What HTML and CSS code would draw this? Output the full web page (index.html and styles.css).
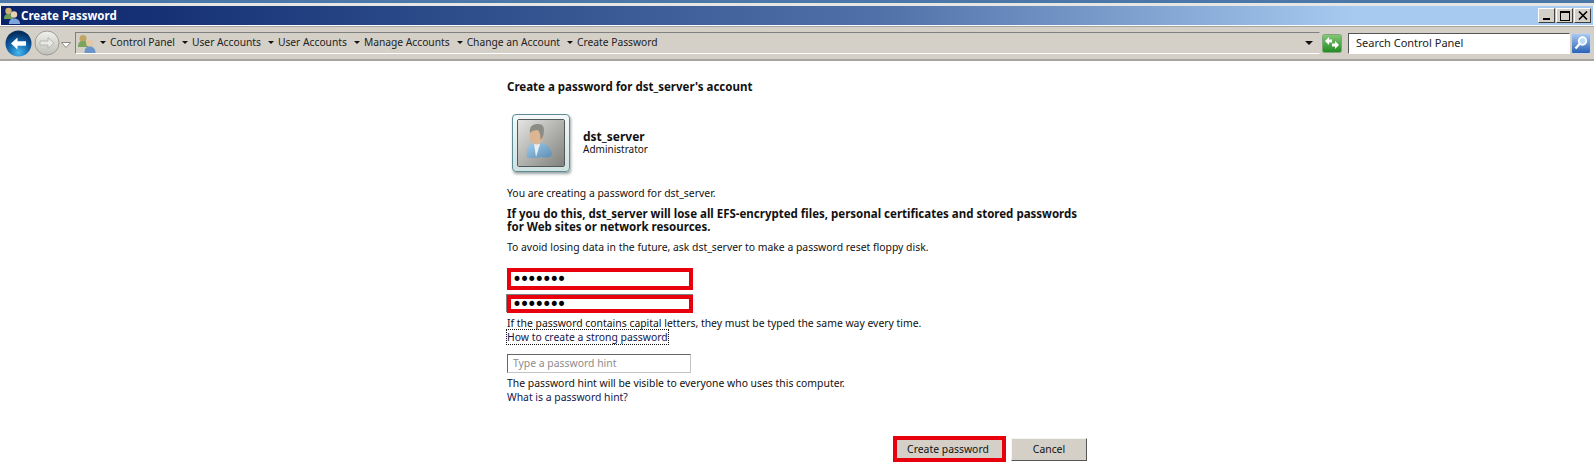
FILE: index.html
```html
<!DOCTYPE html>
<html lang="en">
<head>
<meta charset="utf-8">
<title>Create Password</title>
<link rel="stylesheet" href="styles.css">
</head>
<body>
<div class="topstrip"></div>
<header class="titlebar">
  <svg class="title-icon" width="18" height="17" viewBox="0 0 18 17"><circle cx="5.500" cy="4" r="3.200" fill="#cfae74"/><path d="M1 12c0-4 2-5 4.500-5s4.500 1 4.500 5z" fill="#6f9a58"/><circle cx="11" cy="7.500" r="3.200" fill="#e6d2ae"/><path d="M6 17c0-4 2-5.500 5-5.500s6 1.500 6 5.500z" fill="#7ea6dc"/></svg>
  <span class="title-text">Create Password</span>
  <div class="winbtns">
    <span class="winbtn"><i class="g-min"></i></span>
    <span class="winbtn"><i class="g-max"></i></span>
    <span class="winbtn"><svg width="10" height="9" viewBox="0 0 10 9"><path d="M1 .500l8 8M9 .500l-8 8" stroke="#000" stroke-width="1.600"/></svg></span>
  </div>
</header>
<nav class="toolbar">
  <span class="nav-back"><svg width="27" height="27" viewBox="0 0 27 27"><defs><radialGradient id="bk" cx="50%" cy="85%" r="75%"><stop offset="0" stop-color="#45b8ee"/><stop offset=".6" stop-color="#0f5fa6"/><stop offset="1" stop-color="#062f60"/></radialGradient></defs><circle cx="13.500" cy="13.500" r="13" fill="url(#bk)"/><path d="M6 13.500l6.500-6v3.800h8.500v4.400h-8.500v3.800z" fill="#fff"/></svg></span>
  <span class="nav-fwd"><svg width="26" height="26" viewBox="0 0 26 26"><defs><linearGradient id="fw" x1="0" y1="0" x2="0" y2="1"><stop offset="0" stop-color="#f0f0ec"/><stop offset="1" stop-color="#c0c0ba"/></linearGradient></defs><circle cx="13" cy="13" r="12" fill="url(#fw)" stroke="#9c9c96"/><path d="M20 13l-6-5.500v3.500h-8v4h8v3.500z" fill="#e8e8e4" stroke="#aeaea8" stroke-width=".8"/></svg></span>
  <svg class="nav-drop" width="10" height="6" viewBox="0 0 10 6"><path d="M.5.500h9L5 5.500z" fill="#fff" stroke="#8a8a86"/></svg>
  <div class="address">
    <svg class="addr-icon" width="19" height="19" viewBox="0 0 19 19"><circle cx="6" cy="4.500" r="3.500" fill="#bfa460"/><path d="M1 13c0-5 2-6 5-6s5 1 5 6z" fill="#7aa55e"/><circle cx="12.500" cy="9" r="3.500" fill="#e0c9a4"/><path d="M7.500 19c0-5 2-6.500 5-6.500s6 1.500 6 6.500z" fill="#6b94c8"/></svg>
    <ol class="crumbs">
      <li>Control Panel</li>
      <li>User Accounts</li>
      <li>User Accounts</li>
      <li>Manage Accounts</li>
      <li>Change an Account</li>
      <li>Create Password</li>
    </ol>
    <i class="caret addr-caret"></i>
  </div>
  <span class="refresh"><svg width="20" height="19" viewBox="0 0 20 19"><defs><linearGradient id="rf" x1="0" y1="0" x2="0" y2="1"><stop offset="0" stop-color="#88c878"/><stop offset="1" stop-color="#1f8a22"/></linearGradient></defs><rect x=".5" y=".5" width="19" height="18" rx="2" fill="url(#rf)" stroke="#7fa87a"/><path d="M3 7l4-4v2.500h3v3H7V11zM17 11l-4 4v-2.500h-3v-3h3V7z" fill="#fff"/></svg></span>
  <div class="search">Search Control Panel</div>
  <span class="search-btn"><svg width="16" height="16" viewBox="0 0 16 16"><circle cx="9.500" cy="6" r="3.800" fill="#bcdcf6" stroke="#fff" stroke-width="1.800"/><path d="M6.500 9L2.500 13.500" stroke="#fff" stroke-width="2.400"/></svg></span>
</nav>
<main class="content">
  <h1 class="heading">Create a password for dst_server's account</h1>
  <div class="account">
    <div class="avatar">
      <svg width="46" height="46" viewBox="0 0 46 46"><defs><linearGradient id="av" x1="0" y1="0" x2="1" y2="1"><stop offset="0" stop-color="#e4e4e2"/><stop offset="1" stop-color="#80807c"/></linearGradient><linearGradient id="shirt" x1="0" y1="0" x2="1" y2="1"><stop offset="0" stop-color="#a4cce8"/><stop offset="1" stop-color="#5a8cb4"/></linearGradient></defs><rect width="46" height="46" fill="url(#av)"/><path d="M9 37c-1-7 0-12 6-14l4 1 6-1c6 2 9 8 9 12-2 3-7 3-10 2-5 1-12 2-15 0z" fill="url(#shirt)"/><path d="M16 24l2 13 4-13z" fill="#e8f0f4"/><ellipse cx="18.500" cy="15" rx="7" ry="9.500" fill="#dcb592"/><path d="M12 13c-1-7 3-9 8-9s7 3 5.500 11c-1 3-2 4-3 5 0-6-1-9-3-10-3 0-6 1-7.500 3z" fill="#8c8c86"/></svg>
    </div>
    <div class="account-text"><strong>dst_server</strong><span>Administrator</span></div>
  </div>
  <p class="line intro">You are creating a password for dst_server.</p>
  <p class="warn">If you do this, dst_server will lose all EFS-encrypted files, personal certificates and stored passwords for Web sites or network resources.</p>
  <p class="line tip">To avoid losing data in the future, ask dst_server to make a password reset floppy disk.</p>
  <div class="pw pw-first">&#8226;&#8226;&#8226;&#8226;&#8226;&#8226;&#8226;</div>
  <div class="pw pw-second">&#8226;&#8226;&#8226;&#8226;&#8226;&#8226;&#8226;</div>
  <p class="line caps">If the password contains capital letters, they must be typed the same way every time.</p>
  <a class="link focused">How to create a strong password</a>
  <div class="hint">Type a password hint</div>
  <p class="line">The password hint will be visible to everyone who uses this computer.</p>
  <a class="link">What is a password hint?</a>
  <div class="actions">
    <span class="btn btn-primary">Create password</span>
    <span class="btn btn-cancel">Cancel</span>
  </div>
</main>
</body>
</html>
```

FILE: styles.css
```css
* { box-sizing: border-box; }
html, body { margin: 0; height: 473px; overflow: hidden; background: #fff; }
body { font-family: "Noto Sans", "DejaVu Sans", sans-serif; font-size: 10.400px; color: #111; }
p, h1, ol { margin: 0; padding: 0; }

.topstrip { height: 6px; background: linear-gradient(#4b78a8 0 3px, #e6e6e4 3px); }
.titlebar { height: 19px; margin: 0 1px; display: flex; align-items: center; padding: 0 2px 0 2px; background: linear-gradient(90deg, #0a246a, #2f4f8c 30%, #4f70a8 55%, #a6caf0 85%); color: #fff; }
.title-icon { flex: none; }
.title-text { font-weight: 700; font-size: 11.500px; }
.winbtns { margin-left: auto; display: flex; gap: 1px; }
.winbtn { width: 17px; height: 15px; background: #d4d0c8; border: 1px solid; border-color: #fff #404040 #404040 #fff; display: flex; align-items: center; justify-content: center; }
.g-min { width: 7px; height: 2px; background: #000; align-self: flex-end; margin-bottom: 2px; }
.g-max { width: 10px; height: 10px; border: 1px solid #000; border-top-width: 2px; }

.toolbar { height: 35px; margin-top: 1px; display: flex; align-items: center; padding: 0 3px 0 5px; background: #d4d0c8; border: 1px solid #a8a59e; border-width: 1px 0 2px; }
.nav-back, .nav-fwd { display: flex; }
.nav-fwd { margin-left: 2px; }
.nav-drop { margin-left: 1px; margin-top: 4px; }
.address { flex: 1; height: 22px; margin-left: 4px; display: flex; align-items: center; border: 1px solid; border-color: #808080 #d4d0c8 #fff #808080; padding-left: 1px; }
.addr-icon { flex: none; }
.crumbs { list-style: none; display: flex; color: #222; font-size: 10.250px; margin-bottom: 2px; }
.crumbs li { display: flex; align-items: center; margin-right: 3px; white-space: nowrap; }
.crumbs li::before { content: ""; margin: 0 4px 0 4px; border: 3px solid transparent; border-top: 3px solid #111; border-bottom: 0; }
.caret { border: 4px solid transparent; border-top: 4px solid #111; border-bottom: 0; }
.addr-caret { margin-left: auto; margin-right: 6px; }
.refresh { display: flex; margin-left: 2px; }
.search { width: 222px; height: 21px; margin-left: 6px; padding-left: 7px; line-height: 17px; background: #fff; border: 1px solid; border-color: #555 #fff #fff #555; color: #222; font-size: 11px; }
.search-btn { width: 20px; height: 21px; display: flex; align-items: center; justify-content: center; background: linear-gradient(#a8c8ee, #2a62b8); border: 1px solid #c8d4e4; border-radius: 2px; margin-left: 1px; }

.content { width: 570px; margin-left: 507px; padding-top: 19px; display: flex; flex-direction: column; align-items: flex-start; }
.heading { font-size: 11.500px; font-weight: 700; line-height: 14px; }
.account { display: flex; align-items: center; margin-top: 17px; margin-left: 5px; height: 64px; }
.avatar { width: 58px; height: 58px; padding: 4px; border: 1px solid #5f8c94; border-radius: 4px; background: linear-gradient(#f4f8f8, #cfe0e0); box-shadow: 1px 2px 3px #98a4a4; }
.avatar svg { display: block; width: 100%; height: 100%; border: 1px solid #55585a; border-radius: 2px; }
.account-text { display: flex; flex-direction: column; margin-left: 13px; line-height: 13px; }
.account-text strong { font-size: 12px; }
.account-text span { font-size: 10px; }
.line { line-height: 14px; white-space: nowrap; }
.intro { margin-top: 11px; }
.warn { margin-top: 7px; width: 578px; font-weight: 700; font-size: 11.500px; line-height: 13px; }
.tip { margin-top: 7px; }
.pw { width: 186px; display: flex; align-items: center; padding-left: 1px; border: 4px solid #e8000d; background: #fff; color: #000; font-size: 17px; letter-spacing: -2.600px; font-family: "DejaVu Sans", sans-serif; }
.pw-first { height: 22px; margin-top: 14px; }
.pw-second { height: 18px; margin-top: 5px; box-shadow: 0 -1px #808080, -1px -1px #808080; }
.caps { margin-top: 3px; }
.link { color: #14144e; line-height: 14px; white-space: nowrap; }
.focused { outline: 1px dotted #111; outline-offset: 0; }
.hint { width: 184px; height: 19px; margin-top: 10px; margin-bottom: 3px; padding-left: 5px; line-height: 17px; border: 1px solid; border-color: #666 #c4c4c4 #c4c4c4 #666; color: #8c8c8c; }
.actions { align-self: flex-end; display: flex; margin-top: 32px; margin-right: -10px; align-items: center; gap: 5px; }
.btn { height: 23px; display: flex; align-items: center; justify-content: center; background: #d4d0c8; color: #111; }
.btn-primary { width: 113px; height: 26px; border: 4px solid #e8000d; padding-right: 3px; }
.btn-cancel { width: 76px; border: 1px solid; border-color: #f4f4f0 #555 #555 #f4f4f0; }
```
